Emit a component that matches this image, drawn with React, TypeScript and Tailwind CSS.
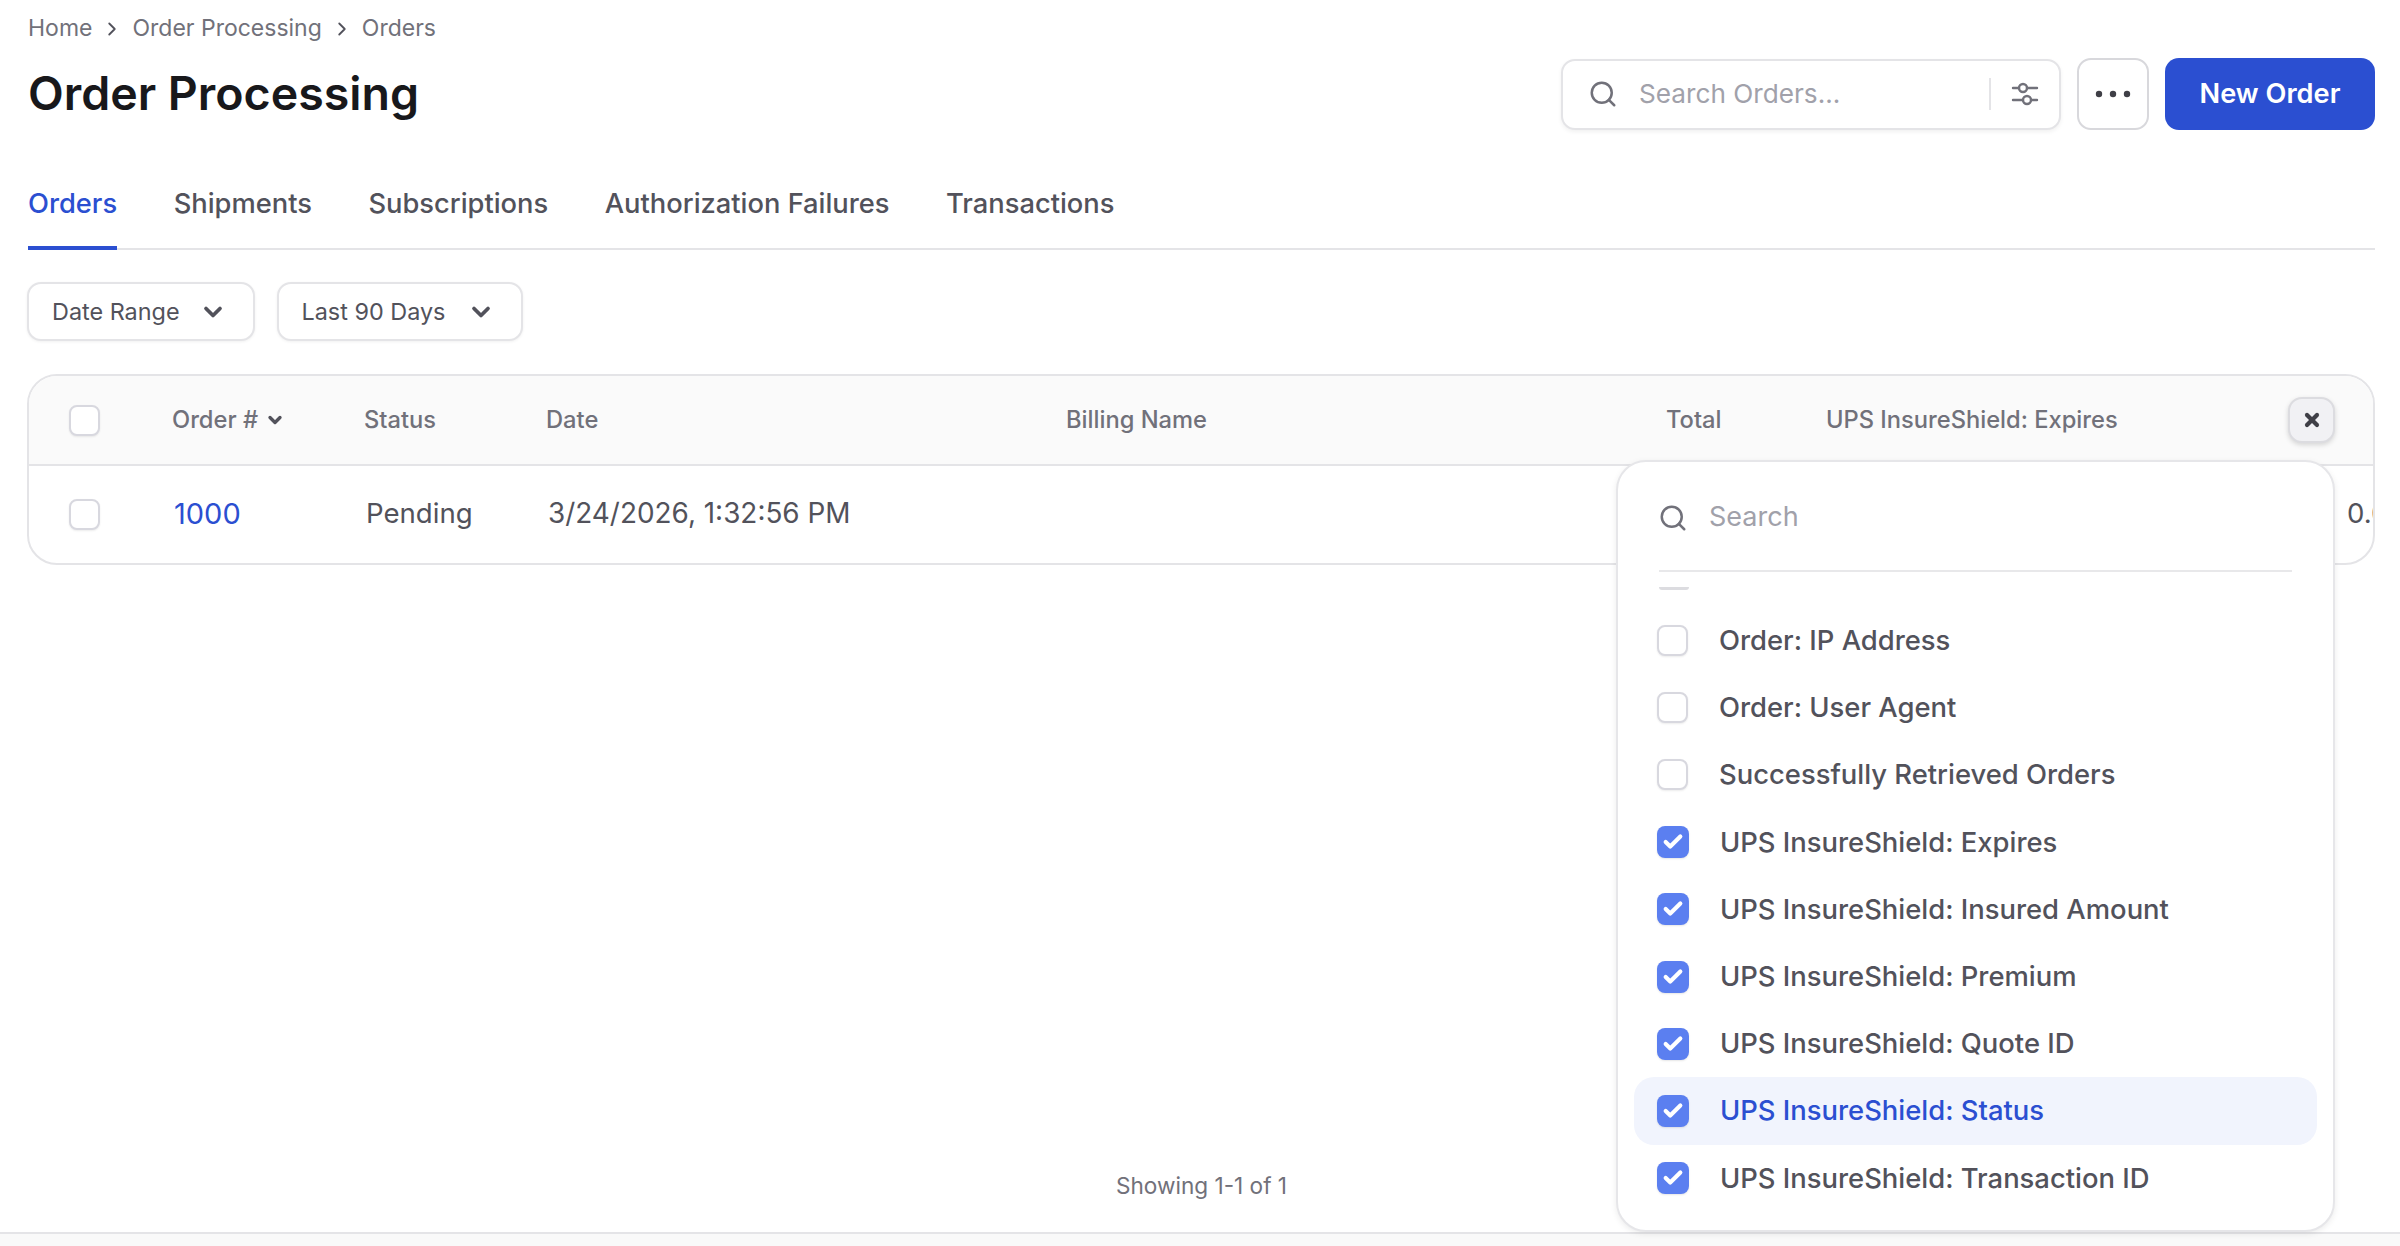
import React from "react";
import { Search, ChevronRight, ChevronDown, Check, X } from "lucide-react";

function Box({ checked }: { checked?: boolean }) {
  return checked ? (
    <span className="flex h-[32px] w-[32px] shrink-0 items-center justify-center rounded-[8px] bg-[#5b7ff0] shadow-[0_1px_2px_rgba(0,0,0,0.1)]">
      <Check className="h-[22px] w-[22px] text-white" strokeWidth={4.5} />
    </span>
  ) : (
    <span className="block h-[31px] w-[31px] shrink-0 rounded-[8px] border-2 border-[#d8d8df] bg-white shadow-[0_1px_2px_rgba(0,0,0,0.08)]" />
  );
}

const items: { label: string; checked: boolean; active?: boolean }[] = [
  { label: "Order: IP Address", checked: false },
  { label: "Order: User Agent", checked: false },
  { label: "Successfully Retrieved Orders", checked: false },
  { label: "UPS InsureShield: Expires", checked: true },
  { label: "UPS InsureShield: Insured Amount", checked: true },
  { label: "UPS InsureShield: Premium", checked: true },
  { label: "UPS InsureShield: Quote ID", checked: true },
  { label: "UPS InsureShield: Status", checked: true, active: true },
  { label: "UPS InsureShield: Transaction ID", checked: true },
];

function Filter({ label, width }: { label: string; width: string }) {
  return (
    <button className={`flex h-[59px] ${width} items-center justify-between rounded-[14px] border-2 border-[#e4e4e7] bg-white pl-[23px] pr-[26px] text-[23.4px] text-[#52525b] shadow-[0_1px_3px_rgba(0,0,0,0.06)]`}>
      {label}
      <ChevronDown className="h-[28px] w-[28px] text-[#52525b]" strokeWidth={3.2} />
    </button>
  );
}

export default function App() {
  return (
    <div className="relative flex h-[1246px] w-[2400px] flex-col overflow-hidden bg-white font-[Inter,sans-serif]">
      <main className="flex flex-1 flex-col pl-[28px] pr-[25px]">
        <nav className="mt-[15px] flex h-[27px] items-center gap-[9px] text-[23px] text-[#71717a]">
          <span>Home</span>
          <ChevronRight className="h-[22px] w-[22px] text-[#52525b]" strokeWidth={2} />
          <span>Order Processing</span>
          <ChevronRight className="h-[22px] w-[22px] text-[#52525b]" strokeWidth={2} />
          <span>Orders</span>
        </nav>

        <header className="mt-[16px] flex h-[72px] items-center justify-between">
          <h1 className="text-[46.5px] font-semibold text-[#18181b]">Order Processing</h1>
          <div className="flex items-center gap-[16px]">
            <div className="flex h-[71px] w-[500px] items-center rounded-[14px] border-2 border-[#e4e4e7] bg-white pl-[25px] pr-[20px] shadow-[0_2px_4px_rgba(0,0,0,0.06)]">
              <Search className="h-[30px] w-[30px] shrink-0 text-[#71717a]" strokeWidth={2} />
              <span className="ml-[21px] flex-1 text-[26.2px] text-[#a1a1aa]">Search Orders...</span>
              <span className="mr-[20px] h-[32px] w-[2px] bg-[#e4e4e7]" />
              <svg viewBox="0 0 28 28" className="h-[28px] w-[28px] text-[#71717a]" fill="none" stroke="currentColor" strokeWidth="2.4" strokeLinecap="round">
                <path d="M2 8h6M16 8h10M2 20h10M20 20h6" />
                <circle cx="12" cy="8" r="4" />
                <circle cx="16" cy="20" r="4" />
              </svg>
            </div>
            <button className="flex h-[72px] w-[72px] items-center justify-center rounded-[14px] border-2 border-[#d8d8dc] bg-white">
              <svg viewBox="0 0 36 8" className="h-[8px] w-[36px] fill-[#3f3f46]">
                <circle cx="4" cy="4" r="3.2" />
                <circle cx="18" cy="4" r="3.2" />
                <circle cx="32" cy="4" r="3.2" />
              </svg>
            </button>
            <button className="flex h-[72px] w-[210px] items-center justify-center rounded-[14px] bg-[#2b4fd1] text-[27.2px] font-semibold text-white">
              New Order
            </button>
          </div>
        </header>

        <div className="mt-[40px] flex h-[80px] items-stretch gap-[56.5px] border-b-2 border-[#e4e4e7] text-[27.3px] font-[450] text-[#52525b]">
          <span className="-mb-[2px] border-b-4 border-[#2b4fd1] pt-[14px] text-[#2b4fd1]">Orders</span>
          <span className="pt-[14px]">Shipments</span>
          <span className="pt-[14px]">Subscriptions</span>
          <span className="pt-[14px]">Authorization Failures</span>
          <span className="pt-[14px]">Transactions</span>
        </div>

        <div className="-ml-[1px] mt-[32px] flex gap-[21.5px]">
          <Filter label="Date Range" width="w-[228px]" />
          <Filter label="Last 90 Days" width="w-[246px]" />
        </div>

        <div className="-ml-[1px] mt-[33px] h-[191px] overflow-hidden rounded-[30px] border-2 border-[#e4e4e7]">
          <div className="flex h-[90px] items-center border-b-2 border-[#e4e4e7] bg-[#fafafa] text-[23.7px] font-[450] text-[#71717a]">
            <div className="w-[143px] shrink-0 pl-[40px]"><Box /></div>
            <div className="flex w-[192px] shrink-0 items-center gap-[7px]">
              Order #
              <ChevronDown className="h-[20px] w-[20px] text-[#52525b]" strokeWidth={4} />
            </div>
            <div className="w-[182px] shrink-0">Status</div>
            <div className="w-[520px] shrink-0">Date</div>
            <div className="w-[600px] shrink-0">Billing Name</div>
            <div className="w-[160px] shrink-0">Total</div>
            <div className="w-[462px] shrink-0">UPS InsureShield: Expires</div>
            <button className="flex h-[46px] w-[47px] shrink-0 items-center justify-center rounded-[14px] border-2 border-[#dcdce0] bg-[#f1f1f4] shadow-[0_2px_5px_rgba(0,0,0,0.15)]">
              <X className="h-[20px] w-[20px] text-[#3f3f46]" strokeWidth={5} />
            </button>
          </div>
          <div className="flex h-[96px] items-center text-[27.6px] text-[#52525b]">
            <div className="w-[145px] shrink-0 pl-[40px]"><Box /></div>
            <div className="w-[192px] shrink-0 text-[29px] text-[#2b4fd1]">1000</div>
            <div className="w-[182px] shrink-0">Pending</div>
            <div className="w-[1799px] shrink-0 text-[27.9px]">3/24/2026, 1:32:56 PM</div>
            <div className="shrink-0">0.00</div>
          </div>
        </div>

        <div className="mb-[29px] mt-auto text-center text-[22.6px] text-[#71717a]">Showing 1-1 of 1</div>
      </main>

      <div className="h-[14px] shrink-0 border-t-2 border-[#e4e4e7] bg-[#f9f9f9]" />

      <div className="absolute left-[1616px] top-[460px] flex h-[772px] w-[719px] flex-col rounded-[30px] border-2 border-[#e6e6e9] bg-white px-[16px] shadow-[0_2px_6px_rgba(0,0,0,0.08)]">
        <div className="mx-[25px] flex h-[110px] shrink-0 items-center gap-[21px] border-b-2 border-[#e8e8ea] pt-[3px]">
          <Search className="-ml-[1px] h-[30px] w-[30px] text-[#71717a]" strokeWidth={2} />
          <span className="text-[27px] text-[#a1a1aa]">Search</span>
        </div>
        <div className="ml-[25px] mt-[15px] h-[3px] w-[30px] rounded-b-[4px] bg-[#dcdce0]" />
        <ul className="mt-[17px] flex flex-col">
          {items.map((it) => (
            <li
              key={it.label}
              className={`flex h-[67.2px] items-center gap-[31px] rounded-[20px] pl-[23px] text-[27.4px] font-[450] ${
                it.active ? "bg-[#f1f4fd] text-[#2b4fd1]" : "text-[#52525b]"
              }`}
            >
              <Box checked={it.checked} />
              {it.label}
            </li>
          ))}
        </ul>
      </div>
    </div>
  );
}
